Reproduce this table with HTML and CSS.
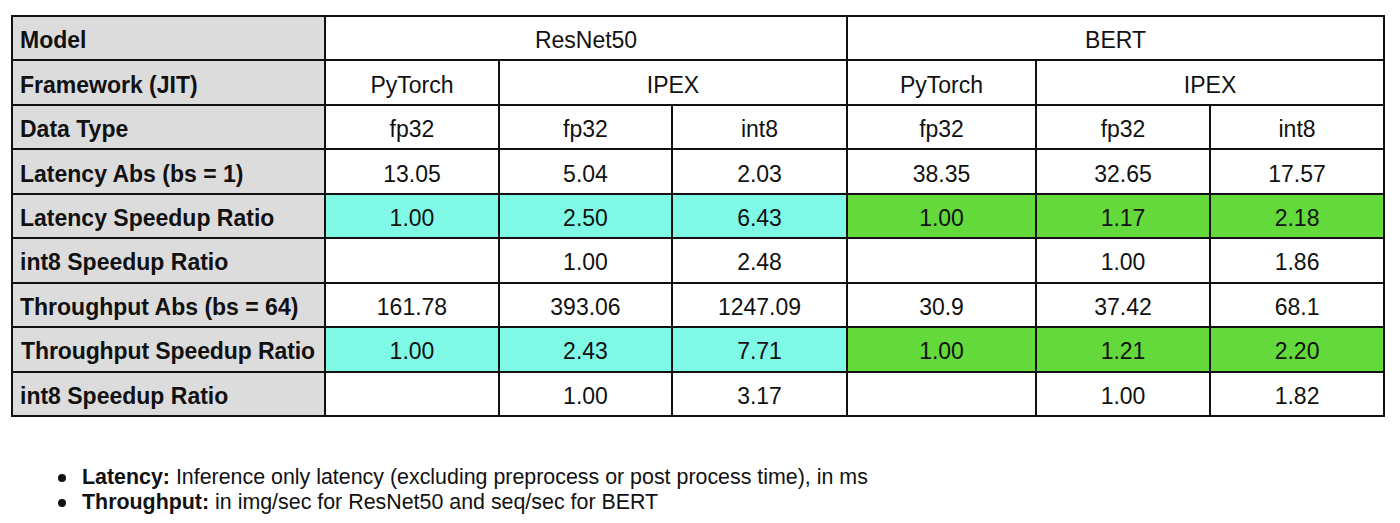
FILE: index.html
```html
<!DOCTYPE html>
<html>
<head>
<meta charset="utf-8">
<link rel="stylesheet" href="styles.css">
</head>
<body>
<table class="bench">
  <colgroup>
    <col class="c-label">
    <col class="c-a">
    <col class="c-b">
    <col class="c-c">
    <col class="c-d">
    <col class="c-e">
    <col class="c-f">
  </colgroup>
  <tr><th>Model</th><td colspan="3">ResNet50</td><td colspan="3">BERT</td></tr>
  <tr><th>Framework (JIT)</th><td>PyTorch</td><td colspan="2">IPEX</td><td>PyTorch</td><td colspan="2">IPEX</td></tr>
  <tr><th>Data Type</th><td>fp32</td><td>fp32</td><td>int8</td><td>fp32</td><td>fp32</td><td>int8</td></tr>
  <tr><th>Latency Abs (bs = 1)</th><td>13.05</td><td>5.04</td><td>2.03</td><td>38.35</td><td>32.65</td><td>17.57</td></tr>
  <tr class="hl"><th>Latency Speedup Ratio</th><td class="cyan">1.00</td><td class="cyan">2.50</td><td class="cyan">6.43</td><td class="green">1.00</td><td class="green">1.17</td><td class="green">2.18</td></tr>
  <tr><th>int8 Speedup Ratio</th><td></td><td>1.00</td><td>2.48</td><td></td><td>1.00</td><td>1.86</td></tr>
  <tr><th>Throughput Abs (bs = 64)</th><td>161.78</td><td>393.06</td><td>1247.09</td><td>30.9</td><td>37.42</td><td>68.1</td></tr>
  <tr class="hl"><th class="tight">Throughput Speedup Ratio</th><td class="cyan">1.00</td><td class="cyan">2.43</td><td class="cyan">7.71</td><td class="green">1.00</td><td class="green">1.21</td><td class="green">2.20</td></tr>
  <tr><th>int8 Speedup Ratio</th><td></td><td>1.00</td><td>3.17</td><td></td><td>1.00</td><td>1.82</td></tr>
</table>
<ul class="notes">
  <li><b>Latency:</b> Inference only latency (excluding preprocess or post process time), in ms</li>
  <li><b>Throughput:</b> in img/sec for ResNet50 and seq/sec for BERT</li>
</ul>
</body>
</html>
```
FILE: styles.css
```css
html, body {
  margin: 0;
  padding: 0;
  background: #ffffff;
}
body {
  font-family: "Liberation Sans", Arial, Helvetica, sans-serif;
  color: #111;
  padding: 15px 0 0 11px;
}
.bench {
  border-collapse: collapse;
  table-layout: fixed;
  width: 1373px;
  font-size: 23px;
}
.c-label { width: 313px; }
.c-a { width: 174px; }
.c-b { width: 173px; }
.c-c { width: 175px; }
.c-d { width: 189px; }
.c-e { width: 174px; }
.c-f { width: 174px; }
.bench tr { height: 44.44px; }
.bench th, .bench td {
  border: 2px solid #111;
  padding: 5px 0 0 0;
  vertical-align: middle;
  line-height: 1;
  white-space: nowrap;
}
.bench th {
  background: #dcdcdc;
  text-align: left;
  font-weight: bold;
  padding-left: 7px;
}
.bench th.tight { padding-left: 8px; letter-spacing: -0.1px; }
.bench td {
  text-align: center;
  font-weight: normal;
}
.bench td.cyan { background: #7ff9e6; }
.bench td.green { background: #63d93b; }
.notes {
  margin: 48px 0 0 0;
  padding: 0 0 0 71px;
  font-size: 21.4px;
  line-height: 25px;
  list-style: none;
}
.notes li { position: relative; }
.notes li::before {
  content: "";
  position: absolute;
  left: -24px;
  top: 9px;
  width: 8px;
  height: 8px;
  border-radius: 50%;
  background: #111;
}
.notes b { font-weight: bold; }
```
